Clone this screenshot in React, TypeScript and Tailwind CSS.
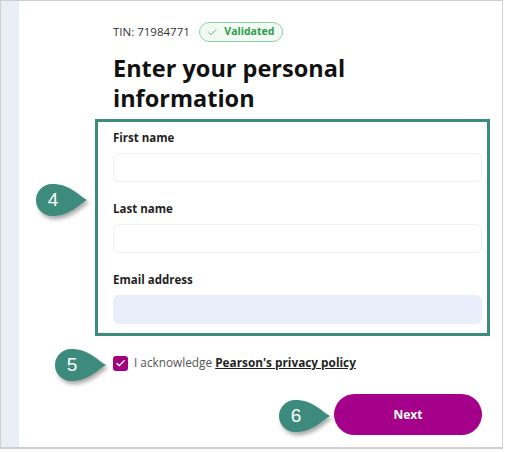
import React from 'react';
import { Check } from 'lucide-react';

function Callout({ n, className }: { n: string; className: string }) {
  return (
    <div className={`absolute w-[56px] h-[34px] ${className}`}>
      <svg width="56" height="34" viewBox="0 0 56 34" className="drop-shadow-[2px_3px_2px_rgba(0,0,0,0.35)]">
        <path d="M55 17 C46 12 38 1 20 1 A16 16 0 1 0 20 33 C38 33 46 22 55 17 Z" fill="#3c8b7d" />
      </svg>
      <span className="absolute left-0 top-0 w-[42px] h-[34px] flex items-center justify-center text-white text-[19px] font-['Liberation_Sans',Arial,sans-serif]">
        {n}
      </span>
    </div>
  );
}

function Field({ label, filled }: { label: string; filled?: boolean }) {
  return (
    <div>
      <label className="block h-5 leading-5 text-[11.5px] font-bold text-[#1f1f1f]">{label}</label>
      <div
        className={`mt-[5px] h-[29px] rounded-md border ${
          filled ? 'bg-[#e8eefa] border-[#e8eefa]' : 'bg-white border-[#efefef]'
        }`}
      />
    </div>
  );
}

function App() {
  return (
    <div className="w-[505px] h-[452px] bg-white font-['Open_Sans',sans-serif] relative overflow-hidden">
      <div className="w-[503px] h-[449px] border border-b-2 border-[#cfcfcf] flex">
        {/* left rail */}
        <div className="w-[18px] bg-[#eaeef7]" />

        {/* form column */}
        <div className="flex-1 pl-[94px] pr-[20px] pt-[21px]">
          <div className="flex items-center h-5 gap-[9px]">
            <span className="text-[11.5px] text-[#333]">TIN: 71984771</span>
            <span className="h-5 w-[84px] flex items-center justify-center gap-[6px] rounded-full border border-[#8fd3a2] bg-[#f1faf3] text-[10.5px] font-bold text-[#2f9d4e]">
              <Check className="w-[11px] h-[11px]" strokeWidth={1.5} />
              Validated
            </span>
          </div>

          <h1 className="mt-[11px] text-[23.5px] leading-[30px] font-bold text-[#111] w-[260px]">
            Enter your personal information
          </h1>

          <div className="mt-[15px] flex flex-col gap-[17px]">
            <Field label="First name" />
            <Field label="Last name" />
            <Field label="Email address" filled />
          </div>

          <div className="mt-[29px] h-5 flex items-center gap-[6px]">
            <span className="w-[15px] h-[15px] rounded-[3px] bg-[#a1007f] flex items-center justify-center">
              <Check className="w-[11px] h-[11px] text-white" strokeWidth={3} />
            </span>
            <span className="text-[11.8px] text-[#555]">
              I acknowledge{' '}
              <a href="#" className="font-bold text-[#1f1f1f] underline">Pearson's privacy policy</a>
            </span>
          </div>

          <div className="mt-[21px] flex justify-end">
            <button className="w-[148px] h-[41px] rounded-full bg-[#a5008a] text-white text-[12px] font-bold">
              Next
            </button>
          </div>
        </div>
      </div>

      {/* annotation overlays */}
      <div className="absolute left-[95px] top-[119px] w-[395px] h-[217px] border-[3px] border-[#3c8b7d]" />
      <Callout n="4" className="left-[32px] top-[183px]" />
      <Callout n="5" className="left-[51px] top-[348px]" />
      <Callout n="6" className="left-[275px] top-[399px]" />
    </div>
  );
}

export default App;
